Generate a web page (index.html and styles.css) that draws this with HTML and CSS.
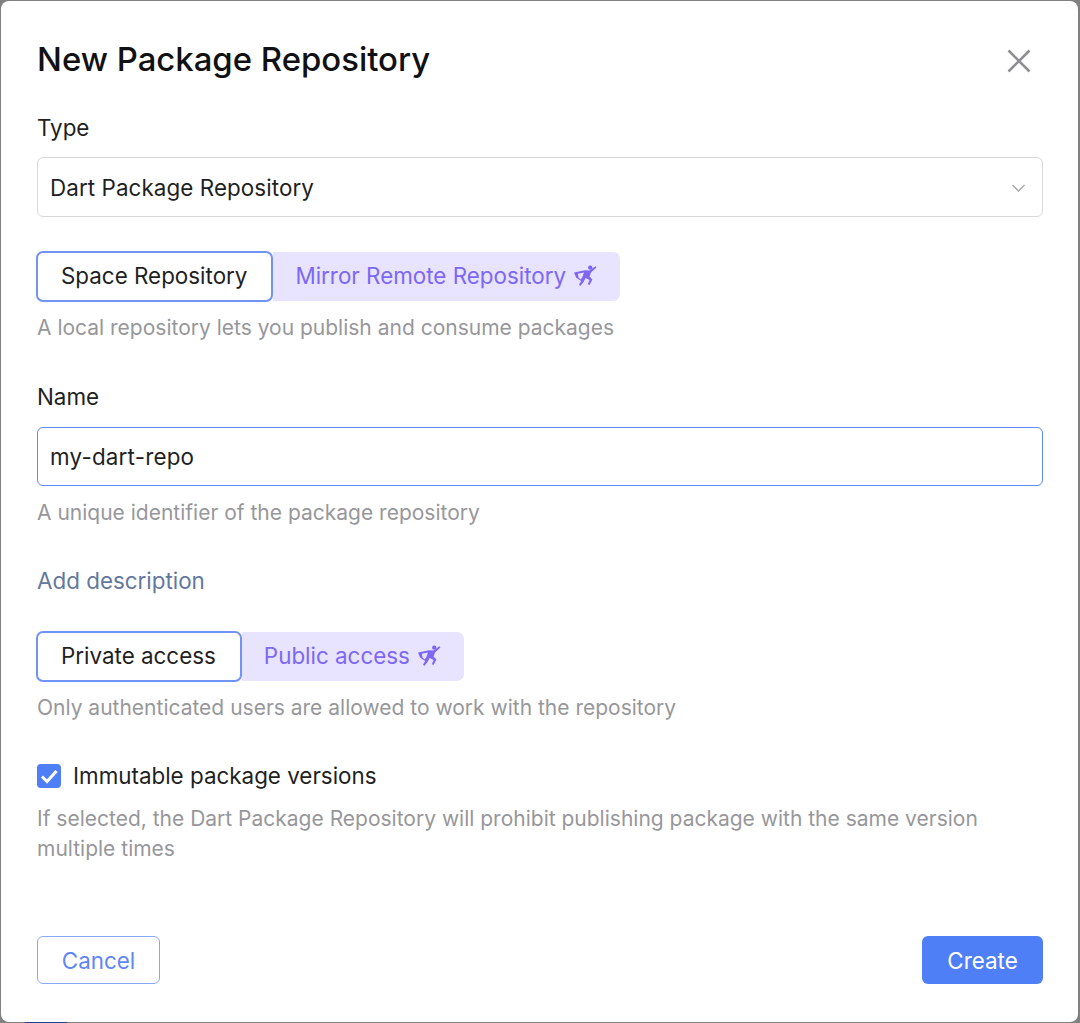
FILE: index.html
```html
<!DOCTYPE html>
<html lang="en">
<head>
<meta charset="utf-8">
<title>New Package Repository</title>
<link rel="stylesheet" href="styles.css">
</head>
<body>
<svg class="defs" width="0" height="0" aria-hidden="true">
  <symbol id="hero" viewBox="0 0 24 24">
    <circle cx="17.2" cy="3.6" r="2.2" fill="currentColor"/>
    <path d="M1 8.5 L12 6.2 L16.5 6.6 L22.5 2.2 L23.4 3.6 L18 8.6 L16.6 12.6 L19.4 15.4 L16.6 21 L14.8 20.2 L16.6 16 L12.6 14 L10.4 18.2 L7.2 22 L6 20.6 L8.2 17 L3.2 13.8 Z" fill="currentColor"/>
    <path d="M4.8 9.8 L11 8.6 L9.2 13.4 L7.6 15.4 L5.6 13.4 Z" fill="#e8e3ff"/>
  </symbol>
</svg>
<div class="peek"></div>
<main class="dialog">
  <header class="head">
    <h1 class="title">New Package Repository</h1>
    <svg class="close" viewBox="0 0 24 24" aria-label="Close"><path d="M1.5 1.5 L22.5 22.5 M22.5 1.5 L1.5 22.5"/></svg>
  </header>

  <div class="label label-type">Type</div>
  <div class="field select">
    <span>Dart Package Repository</span>
    <svg class="chev" viewBox="0 0 14 8"><path d="M1 1 L7 7 L13 1"/></svg>
  </div>

  <div class="segments seg-first">
    <div class="seg seg-on">Space Repository</div>
    <div class="seg seg-off">Mirror Remote Repository <svg class="hero"><use href="#hero"/></svg></div>
  </div>
  <p class="hint hint-seg">A local repository lets you publish and consume packages</p>

  <div class="label label-name">Name</div>
  <div class="field input">my-dart-repo</div>
  <p class="hint hint-name">A unique identifier of the package repository</p>

  <a class="add">Add description</a>

  <div class="segments seg-second">
    <div class="seg seg-on">Private access</div>
    <div class="seg seg-off">Public access <svg class="hero"><use href="#hero"/></svg></div>
  </div>
  <p class="hint hint-seg">Only authenticated users are allowed to work with the repository</p>

  <div class="check-row">
    <span class="check"><svg viewBox="0 0 24 24"><path d="M5 12.5 L10 17.5 L19.5 7"/></svg></span>
    <span>Immutable package versions</span>
  </div>
  <p class="hint hint-check">If selected, the Dart Package Repository will prohibit publishing package with the same version multiple times</p>

  <footer class="foot">
    <button class="btn btn-cancel">Cancel</button>
    <button class="btn btn-create">Create</button>
  </footer>
</main>
</body>
</html>
```
FILE: styles.css
```css
* { box-sizing: border-box; }
html, body { height: 100%; margin: 0; }
body {
  background: #808080;
  padding: 1px;
  font-family: Inter, "Liberation Sans", sans-serif;
  font-size: 22.4px;
  line-height: 30px;
  color: #1f1f23;
  overflow: hidden;
  position: relative;
}
.defs { position: absolute; }
.peek { position: absolute; left: 25px; bottom: 0; width: 42px; height: 2px; background: #1f3f8f; }
.dialog {
  position: relative;
  height: 1021px;
  width: 1077px;
  background: #fff;
  border-radius: 8px;
  padding: 36px 35px 38px 36px;
  display: flex;
  flex-direction: column;
}
.head { display: flex; justify-content: space-between; align-items: center; height: 45px; }
.title { margin: 0; font-size: 32.9px; line-height: 45px; font-weight: 500; color: #111114; }
.close { width: 24px; height: 24px; margin-right: 12px; margin-top: 3px; }
.close path { stroke: #8f8f93; stroke-width: 2.6; fill: none; }
.label-type { margin-top: 31px; }
.field {
  height: 60px;
  border-radius: 6px;
  display: flex;
  align-items: center;
  padding: 0 12px;
}
.select { margin-top: 14px; border: 1.5px solid #d9d9da; justify-content: space-between; padding-top: 2px; letter-spacing: 0.08px; }
.chev { width: 15px; height: 8px; margin-right: 4px; }
.chev path { stroke: #a9a9ac; stroke-width: 1.5; fill: none; }
.segments { display: flex; height: 50px; margin-left: -1px; align-items: center; }
.seg-first { margin-top: 34px; }
.seg-second { margin-top: 35px; }
.seg { display: flex; align-items: center; white-space: pre; }
.seg-on {
  height: 51px;
  border: 2px solid #6f93f7;
  border-radius: 7px;
  background: #fff;
  padding: 0 24px 0 23px;
  color: #1f1f23;
  position: relative;
}
.seg-off {
  height: 49px;
  background: #e8e3ff;
  color: #7d68f4;
  border-radius: 0 7px 7px 0;
  padding: 0 22.5px 0 22px;
}
.hero { width: 24px; height: 24px; margin-left: 1px; color: #7d68f4; }
.hint { margin: 0; color: #97979b; font-size: 21px; }
.hint-seg { margin-top: 12px; }
.label-name { margin-top: 39px; }
.input { margin-top: 15px; border: 1.5px solid #5f88f8; height: 59px; letter-spacing: 0.2px; }
.hint-name { margin-top: 12px; }
.add { display: block; margin-top: 38px; color: #64779c; }
.check-row { display: flex; align-items: center; gap: 12px; margin-top: 38px; }
.check {
  width: 24px;
  height: 24px;
  background: #4f7ff7;
  border-radius: 4px;
  display: flex;
}
.check path { stroke: #fff; stroke-width: 3; fill: none; }
.hint-check { margin-top: 13px; }
.foot { margin-top: auto; display: flex; justify-content: space-between; }
.btn {
  height: 48px;
  border-radius: 6px;
  font: inherit;
  padding: 2px 0 0;
}
.btn-cancel { width: 123px; background: #fff; border: 1.5px solid #8aa8f8; color: #5f86f6; }
.btn-create { width: 121px; background: #4f7ff7; border: 0; color: #fff; }
```
